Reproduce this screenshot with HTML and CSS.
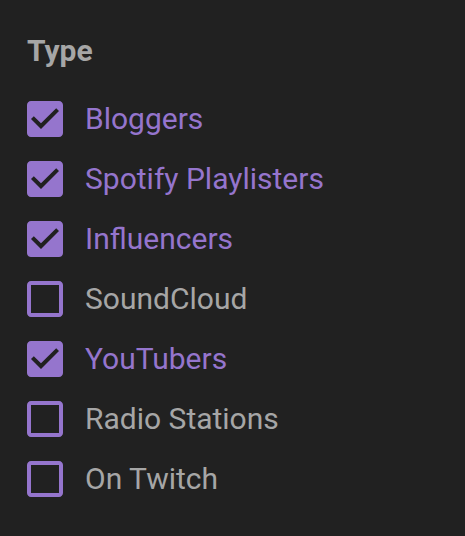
FILE: index.html
```html
<!DOCTYPE html>
<html lang="en">
<head>
<meta charset="utf-8">
<title>Type filter</title>
<link rel="stylesheet" href="styles.css">
</head>
<body>
<section class="filter">
  <h2 class="filter-title">Type</h2>
  <ul class="options">
    <li class="option checked">
      <svg class="box" viewBox="3 3 18 18" aria-hidden="true"><path d="M19 3H5c-1.11 0-2 .9-2 2v14c0 1.1.89 2 2 2h14c1.11 0 2-.9 2-2V5c0-1.1-.89-2-2-2zm-9 14l-5-5 1.41-1.41L10 14.17l7.59-7.59L19 8l-9 9z"/></svg>
      <span class="label">Bloggers</span>
    </li>
    <li class="option checked">
      <svg class="box" viewBox="3 3 18 18" aria-hidden="true"><path d="M19 3H5c-1.11 0-2 .9-2 2v14c0 1.1.89 2 2 2h14c1.11 0 2-.9 2-2V5c0-1.1-.89-2-2-2zm-9 14l-5-5 1.41-1.41L10 14.17l7.59-7.59L19 8l-9 9z"/></svg>
      <span class="label">Spotify Playlisters</span>
    </li>
    <li class="option checked">
      <svg class="box" viewBox="3 3 18 18" aria-hidden="true"><path d="M19 3H5c-1.11 0-2 .9-2 2v14c0 1.1.89 2 2 2h14c1.11 0 2-.9 2-2V5c0-1.1-.89-2-2-2zm-9 14l-5-5 1.41-1.41L10 14.17l7.59-7.59L19 8l-9 9z"/></svg>
      <span class="label">Influencers</span>
    </li>
    <li class="option">
      <svg class="box" viewBox="3 3 18 18" aria-hidden="true"><path d="M19 5v14H5V5h14m0-2H5c-1.1 0-2 .9-2 2v14c0 1.1.9 2 2 2h14c1.1 0 2-.9 2-2V5c0-1.1-.9-2-2-2z"/></svg>
      <span class="label">SoundCloud</span>
    </li>
    <li class="option checked">
      <svg class="box" viewBox="3 3 18 18" aria-hidden="true"><path d="M19 3H5c-1.11 0-2 .9-2 2v14c0 1.1.89 2 2 2h14c1.11 0 2-.9 2-2V5c0-1.1-.89-2-2-2zm-9 14l-5-5 1.41-1.41L10 14.17l7.59-7.59L19 8l-9 9z"/></svg>
      <span class="label">YouTubers</span>
    </li>
    <li class="option">
      <svg class="box" viewBox="3 3 18 18" aria-hidden="true"><path d="M19 5v14H5V5h14m0-2H5c-1.1 0-2 .9-2 2v14c0 1.1.9 2 2 2h14c1.1 0 2-.9 2-2V5c0-1.1-.9-2-2-2z"/></svg>
      <span class="label">Radio Stations</span>
    </li>
    <li class="option">
      <svg class="box" viewBox="3 3 18 18" aria-hidden="true"><path d="M19 5v14H5V5h14m0-2H5c-1.1 0-2 .9-2 2v14c0 1.1.9 2 2 2h14c1.1 0 2-.9 2-2V5c0-1.1-.9-2-2-2z"/></svg>
      <span class="label">On Twitch</span>
    </li>
  </ul>
</section>
</body>
</html>
```

FILE: styles.css
```css
html, body {
  margin: 0;
  padding: 0;
  background: #212121;
  height: 100%;
}

body {
  font-family: Roboto, "Noto Sans", "Liberation Sans", sans-serif;
}

.filter {
  padding: 33px 0 0 27px;
}

.filter-title {
  margin: 0 0 21px 0;
  font-size: 30px;
  font-weight: 700;
  line-height: normal;
  color: #a6a6a6;
}

.options {
  list-style: none;
  margin: 0;
  padding: 0;
}

.option {
  display: flex;
  align-items: center;
  height: 60px;
  gap: 22px;
}

.box {
  width: 36px;
  height: 36px;
  flex: none;
  fill: #9575cd;
}

.label {
  font-size: 30px;
  line-height: normal;
  color: #a6a6a6;
  position: relative;
  top: -1px;
}

.option.checked .label {
  color: #9575cd;
}
```
